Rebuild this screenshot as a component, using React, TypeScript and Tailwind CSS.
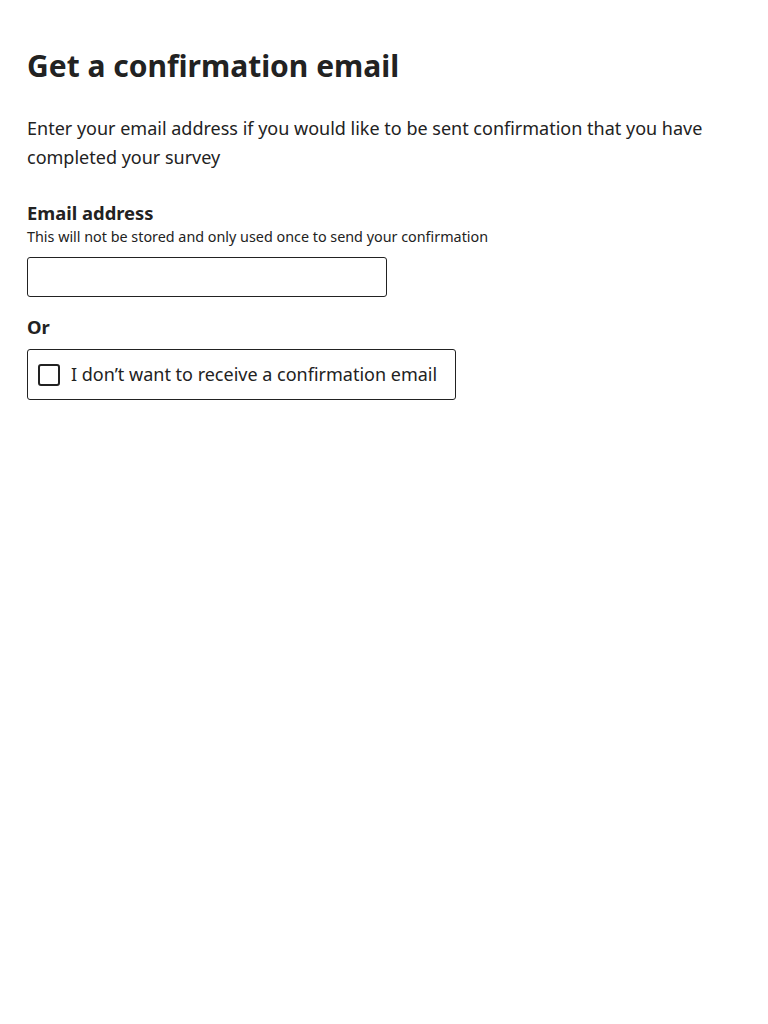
import React from 'react';

const App = () => {
    return (
        <div className="min-h-screen bg-white text-[#222222] px-[27px] pt-[44px]" style={{ fontFamily: '"Noto Sans", sans-serif' }}>
            {/* Heading */}
            <h1 className="text-[30px] leading-[44px] font-bold mb-[26px]">Get a confirmation email</h1>
            <p className="text-[18px] leading-[29px] mb-[28px]">
                Enter your email address if you would like to be sent confirmation that you have completed your survey
            </p>

            {/* Email field */}
            <div className="flex flex-col">
                <label htmlFor="email" className="text-[18.4px] leading-[25px] pb-[2px] font-bold">Email address</label>
                <span className="text-[14.35px] leading-[20px] mb-[10px]">This will not be stored and only used once to send your confirmation</span>
                <input
                    id="email"
                    type="email"
                    className="w-[360px] h-[40px] border border-[#222222] rounded-[3px] px-2 text-[18px] outline-none"
                />
            </div>

            <p className="text-[18.4px] leading-[27px] font-bold mt-[16px] mb-[9px]">Or</p>

            {/* Opt out */}
            <label className="inline-flex items-center gap-[11px] border border-[#222222] rounded-[3px] pl-[10px] pr-[18px] h-[51px] cursor-pointer">
                <span className="w-[22px] h-[22px] border-2 border-[#222222] rounded-[3px] bg-white"></span>
                <span className="text-[18px] leading-[27px]">I don’t want to receive a confirmation email</span>
            </label>
        </div>
    );
};

export default App;
